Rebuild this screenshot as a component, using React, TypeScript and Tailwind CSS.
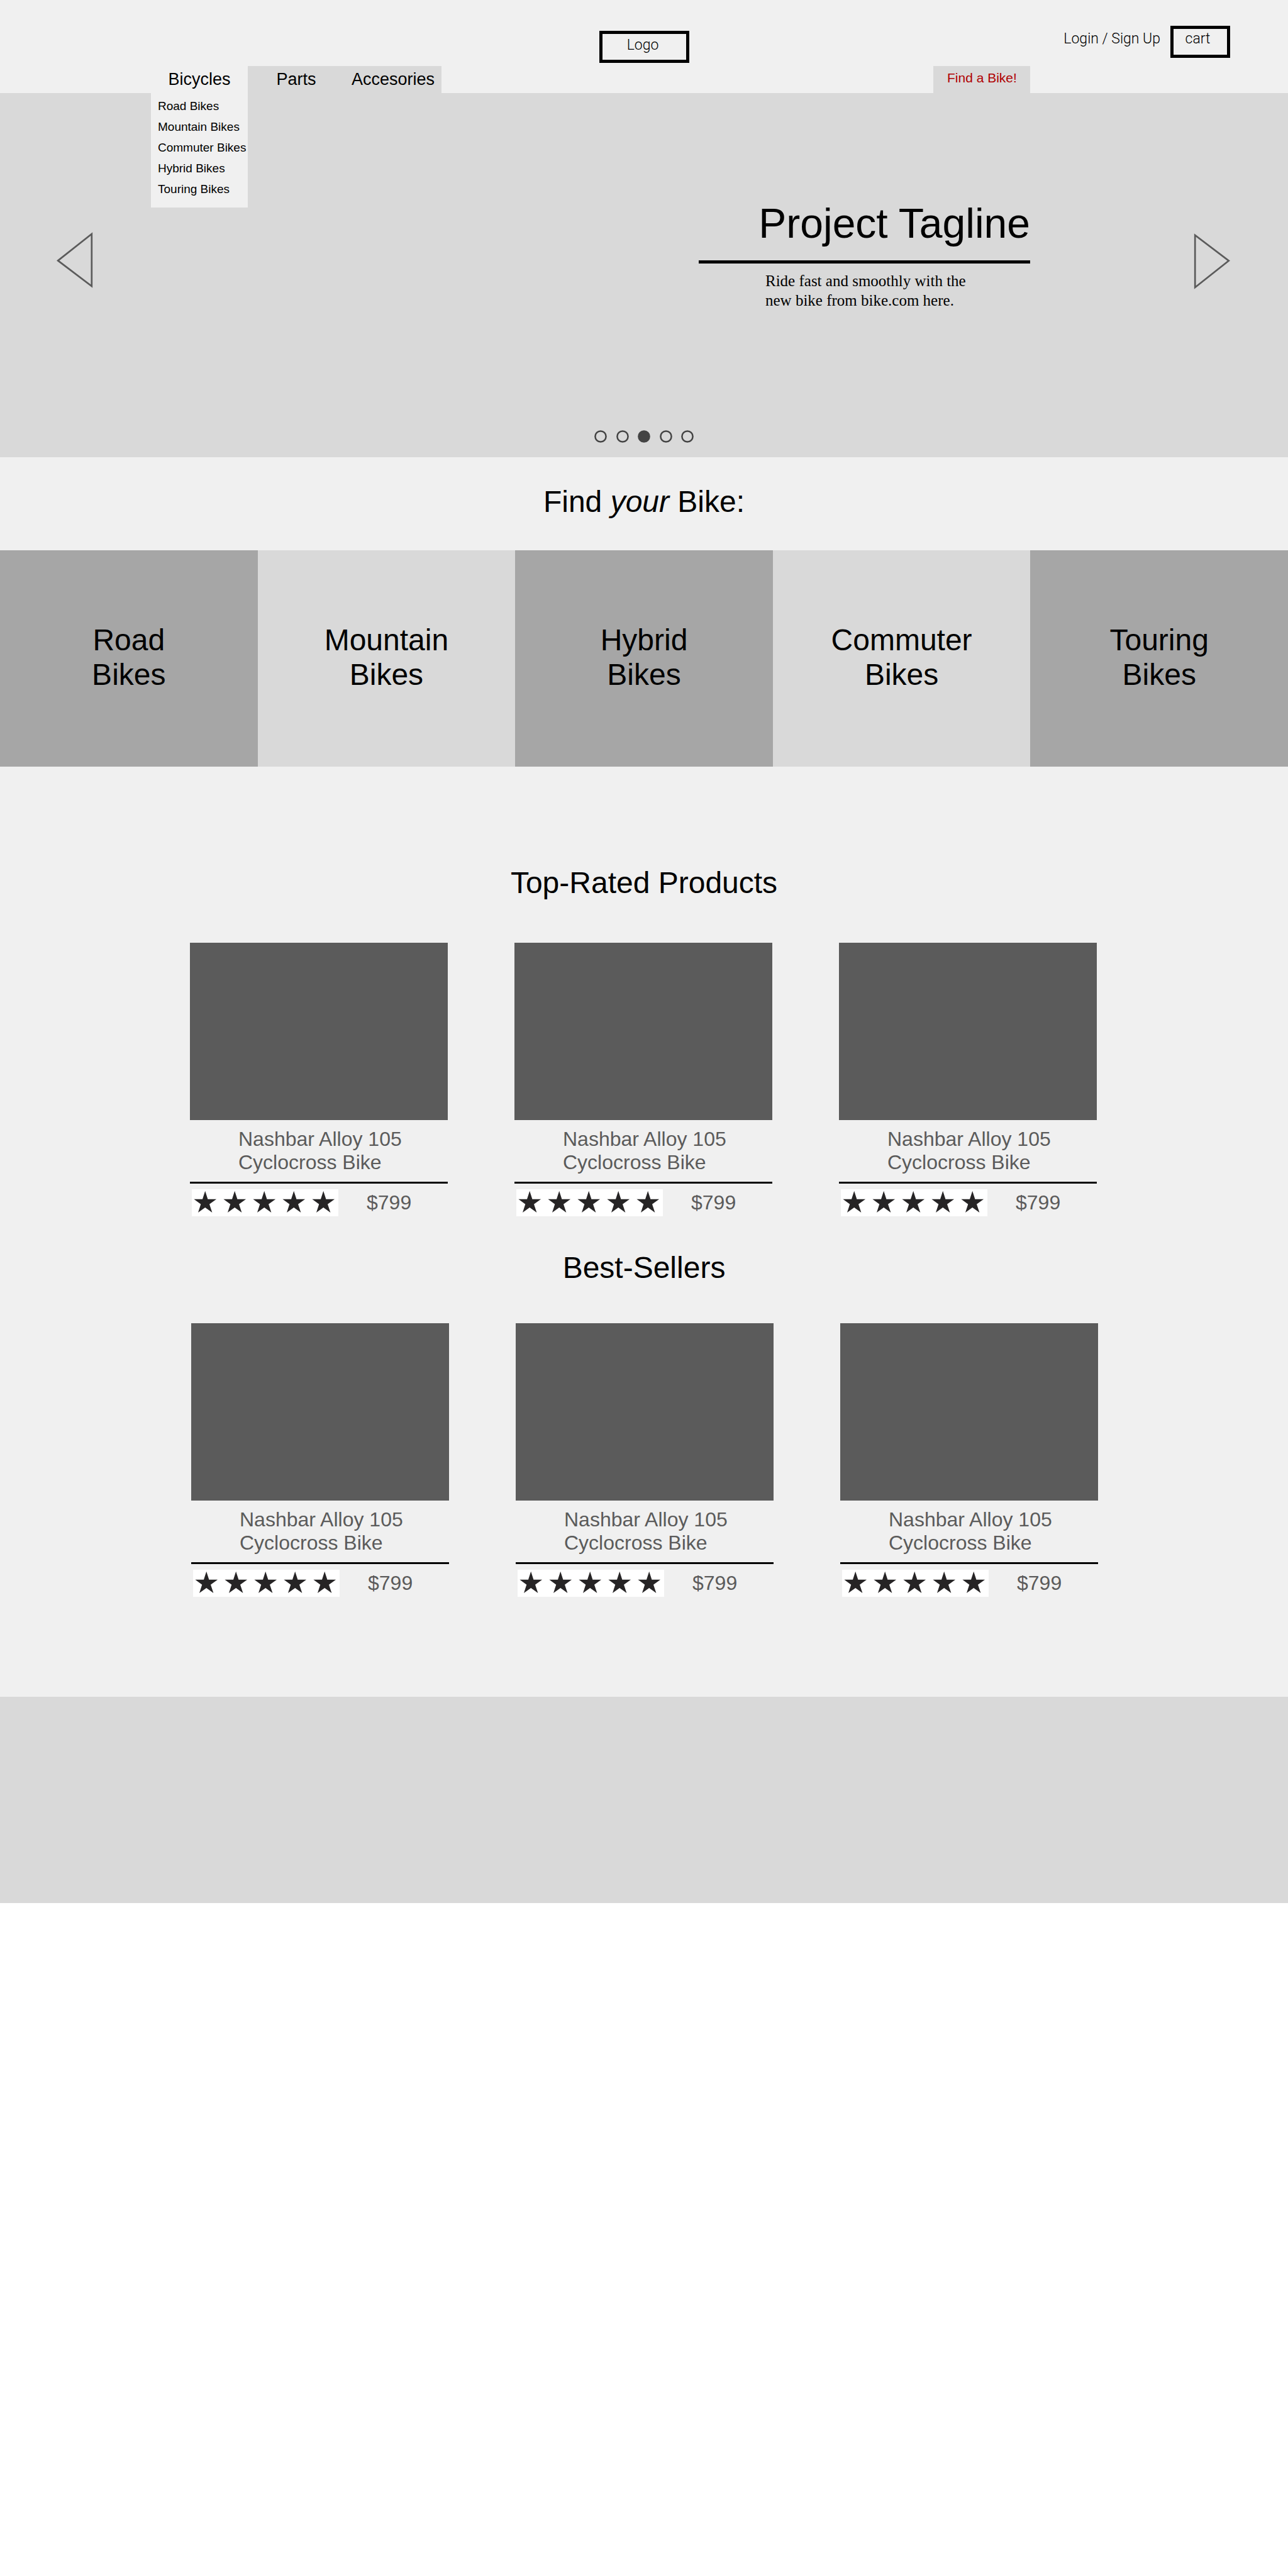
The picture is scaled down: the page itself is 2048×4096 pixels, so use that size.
const bikeLinks = ["Road Bikes", "Mountain Bikes", "Commuter Bikes", "Hybrid Bikes", "Touring Bikes"];

const categories = [
  { name: "Road", tone: "bg-[#a6a6a6]" },
  { name: "Mountain", tone: "bg-[#d9d9d9]" },
  { name: "Hybrid", tone: "bg-[#a6a6a6]" },
  { name: "Commuter", tone: "bg-[#d9d9d9]" },
  { name: "Touring", tone: "bg-[#a6a6a6]" },
];

const products = [0, 1, 2].map((id) => ({
  id,
  name: ["Nashbar Alloy 105", "Cyclocross Bike"],
  price: "$799",
}));

function Header() {
  return (
    <header className="bg-[#f0f0f0]">
      <div className="grid h-[105px] grid-cols-[1fr_auto_1fr] items-start font-['Roboto',sans-serif] text-[23px] leading-[28px] font-light">
        <a
          href="#home"
          className="col-start-2 mt-[49px] h-[51px] w-[143px] border-5 border-black pt-1 pr-1 text-center"
        >
          Logo
        </a>
        <div className="mt-[41px] flex items-start justify-end gap-4 pr-[92px]">
          <a href="#login" className="mt-[7px]">
            Login / Sign Up
          </a>
          <button type="button" className="h-[51px] w-[95px] border-5 border-black pb-[9px] pr-2 text-center">
            cart
          </button>
        </div>
      </div>
      <nav className="flex h-[43px] pl-[240px] pr-[20%] text-center text-[27px] leading-[43px]">
        <div className="relative w-[154px]">
          <a href="#bicycles" className="block">
            Bicycles
          </a>
          <ul className="absolute top-full left-0 z-10 w-full bg-[#f0f0f0] pt-1 pb-[13px] pl-[11px] text-left text-[19px] leading-[33px] whitespace-nowrap">
            {bikeLinks.map((label) => (
              <li key={label}>
                <a href="#bikes">{label}</a>
              </li>
            ))}
          </ul>
        </div>
        <a href="#parts" className="w-[154px] bg-[#d9d9d9]">
          Parts
        </a>
        <a href="#accessories" className="w-[154px] bg-[#d9d9d9]">
          Accesories
        </a>
        <a href="#find" className="ml-auto w-[154px] bg-[#d9d9d9] text-[21px] leading-[38px] text-[#b00000]">
          Find a Bike!
        </a>
      </nav>
    </header>
  );
}

function Hero() {
  return (
    <section className="bg-[#d9d9d9] pt-[169px] pb-[23px]">
      <div className="flex items-start pr-[92px] pl-[90px]">
        <button type="button" aria-label="Previous slide" className="mt-[52px]">
          <svg width="58" height="89" viewBox="0 0 58 89" fill="none" stroke="#5b5b5b" strokeWidth="2.7">
            <path d="M2.2 45.4 55.8 3V86Z" />
          </svg>
        </button>
        <div className="mr-[260px] ml-auto w-[527px]">
          <h1 className="text-right text-[66px] leading-[76px] whitespace-nowrap">Project Tagline</h1>
          <hr className="mt-[21px] border-t-5 border-black" />
          <p className="mt-3 ml-[106px] text-left font-['Liberation_Serif',serif] text-[25px] leading-[31px]">
            Ride fast and smoothly with the
            <br />
            new bike from bike.com here.
          </p>
        </div>
        <button type="button" aria-label="Next slide" className="mt-[54px]">
          <svg width="58" height="89" viewBox="0 0 58 89" fill="none" stroke="#5b5b5b" strokeWidth="2.7">
            <path d="M55.8 43.6 2.2 3V86Z" />
          </svg>
        </button>
      </div>
      <div className="mx-auto mt-[191px] flex w-[158px] justify-between">
        {[0, 1, 2, 3, 4].map((i) => (
          <button key={i} type="button" aria-label={`Slide ${i + 1}`}>
            <svg width="20" height="20" viewBox="0 0 20 20" stroke="#444444" strokeWidth="2.5">
              <circle cx="10" cy="10" r="8.6" fill={i === 2 ? "#444444" : "none"} />
            </svg>
          </button>
        ))}
      </div>
    </section>
  );
}

function Stars() {
  return (
    <svg width="233" height="43" viewBox="0 0 233 43" className="ml-[3px] bg-white" role="img" aria-label="5 out of 5 stars">
      {[0, 47, 94, 141, 188].map((x) => (
        <path
          key={x}
          transform={`translate(${x} 0)`}
          fill="#262425"
          d="M21.2 2.7 25.4 15.7H39.1L28 23.7 32.4 37 21.2 29 10 37 14.3 23.7 3.4 15.7H17Z"
        />
      ))}
    </svg>
  );
}

function ProductRow({ inset }: { inset: string }) {
  return (
    <div className={"grid grid-cols-3 gap-x-[106px] text-left text-[#5b5b5b] " + inset}>
      {products.map((p) => (
        <article key={p.id}>
          <div className="h-[282px] bg-[#5b5b5b]" />
          <h3 className="mt-3 ml-[77px] text-[32px] leading-[37px]">
            {p.name[0]}
            <br />
            {p.name[1]}
          </h3>
          <hr className="mt-3 border-t-3 border-black" />
          <div className="mt-[9px] flex items-center">
            <Stars />
            <p className="ml-[45px] text-[32px] leading-[37px]">{p.price}</p>
          </div>
        </article>
      ))}
    </div>
  );
}

export default function App() {
  return (
    <div className="bg-white font-['Liberation_Sans',sans-serif] text-black">
      <Header />
      <main className="bg-[#f0f0f0] pb-[159px] text-center text-[48px] leading-[55px]">
        <Hero />
        <h2 className="pt-[43px] pb-[50px]">
          Find <em>your</em> Bike:
        </h2>
        <div className="grid grid-cols-5">
          {categories.map((c) => (
            <a key={c.name} href="#category" className={"pt-[115px] pb-[119px] " + c.tone}>
              {c.name}
              <br />
              Bikes
            </a>
          ))}
        </div>
        <section className="pt-[157px]">
          <h2 className="mb-[68px]">Top-Rated Products</h2>
          <ProductRow inset="pl-[302px] pr-[304px]" />
        </section>
        <section className="pt-[54px]">
          <h2 className="mb-[61px]">Best-Sellers</h2>
          <ProductRow inset="pl-[304px] pr-[302px]" />
        </section>
      </main>
      <footer className="h-[328px] bg-[#d9d9d9]" />
    </div>
  );
}
